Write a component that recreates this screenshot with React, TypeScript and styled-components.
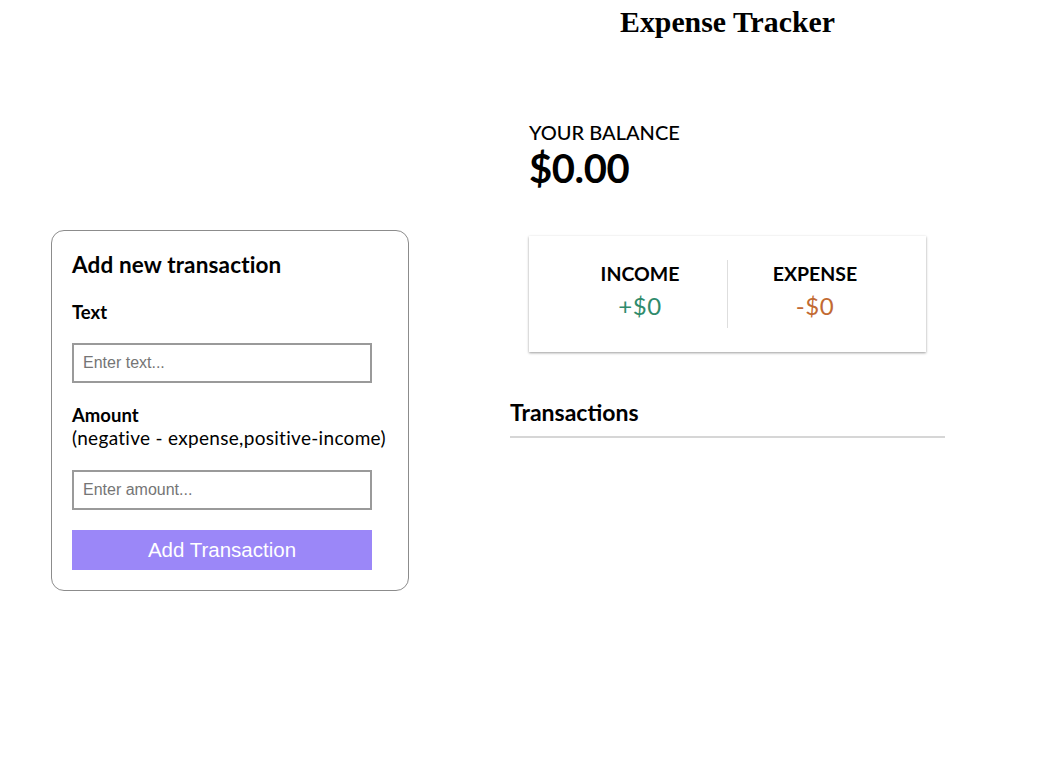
import React from 'react'
import styled, { createGlobalStyle } from 'styled-components'

const GlobalStyle = createGlobalStyle`
  body {
    margin: 0;
    background: #fff;
    color: #000;
    font-family: Lato, 'Noto Sans', sans-serif;
  }
`

const SPage = styled.div`
  display: flex;
  align-items: flex-start;
  gap: 101px;
  padding-left: 51px;
`

// left column: the form card
const SFormCard = styled.form`
  width: 358px;
  box-sizing: border-box;
  margin-top: 230px;
  padding: 20px;
  border: 1px solid #8c8c8c;
  border-radius: 13px;
  display: flex;
  flex-direction: column;
`

const SFormTitle = styled.h3`
  margin: 0 0 23px;
  font-size: 22.5px;
  font-weight: 700;
  line-height: 1.2;
  letter-spacing: 0.15px;
`

const SLabel = styled.label`
  display: block;
  font-size: 18.5px;
  font-weight: 700;
  line-height: 1.2;
  margin-bottom: ${p => p.$gap || 20}px;

  span {
    display: block;
    margin-top: 1px;
    font-size: 19px;
    font-weight: 400;
    letter-spacing: 0.3px;
  }
`

const SInput = styled.input`
  width: 300px;
  height: 40px;
  box-sizing: border-box;
  padding: 0 9px;
  border: 2px solid #9a9a9a;
  border-radius: 0;
  font-family: 'Liberation Sans', Arial, sans-serif;
  font-size: 16px;
  margin-bottom: ${p => p.$gap || 20}px;
  outline: none;

  &::placeholder {
    color: #757575;
  }
`

const SButton = styled.button`
  width: 300px;
  height: 40px;
  border: none;
  background: #9b87f8;
  color: #fff;
  font-family: 'Liberation Sans', Arial, sans-serif;
  font-size: 20.5px;
  cursor: pointer;
`

// right column
const SMain = styled.div`
  width: 435px;
  display: flex;
  flex-direction: column;
`

const STitle = styled.h1`
  margin: 5px 0 0;
  text-align: center;
  font-family: 'Liberation Serif', 'Times New Roman', serif;
  font-size: 29.8px;
  font-weight: 700;
`

const SBalance = styled.div`
  padding: 0 19px;
  margin-top: 81px;
`

const SBalanceLabel = styled.h4`
  margin: 0;
  font-size: 20px;
  font-weight: 500;
  line-height: 1.2;
`

const SBalanceValue = styled.h1`
  margin: 0;
  font-size: 40px;
  font-weight: 700;
  line-height: 1.2;
  letter-spacing: -0.4px;
`

const SSummary = styled.div`
  margin-top: 44px;
  padding: 24px 24px;
  display: flex;
  background: #fff;
  box-shadow: 0 1px 3px rgba(0, 0, 0, 0.18), 0 1px 2px rgba(0, 0, 0, 0.24);
`

const SSummaryCol = styled.div`
  flex: 1;
  text-align: center;
  padding: 2px 0 7px;
  border-right: ${p => (p.$divider ? '1px solid #dedede' : 'none')};
`

const SSummaryLabel = styled.h4`
  margin: 0;
  font-size: 19.5px;
  font-weight: 700;
  line-height: 1.2;
  text-transform: uppercase;
`

const SSummaryValue = styled.p`
  margin: 7px 0 0;
  font-size: 24px;
  line-height: 1.2;
  letter-spacing: 0.6px;
  color: ${p => p.$color};
`

const SSectionTitle = styled.h3`
  margin: 47px 0 0;
  padding-bottom: 9px;
  font-size: 23px;
  font-weight: 700;
  line-height: 1.2;
  border-bottom: 2px solid #d6d6d6;
`

export default function App() {
  return (
    <>
      <GlobalStyle />
      <SPage>
        <SFormCard onSubmit={e => e.preventDefault()}>
          <SFormTitle>Add new transaction</SFormTitle>
          <SLabel htmlFor='text' $gap={20}>Text</SLabel>
          <SInput id='text' type='text' placeholder='Enter text...' $gap={21} />
          <SLabel htmlFor='amount' $gap={20}>
            Amount
            <span>(negative - expense,positive-income)</span>
          </SLabel>
          <SInput id='amount' type='number' placeholder='Enter amount...' $gap={20} />
          <SButton type='submit'>Add Transaction</SButton>
        </SFormCard>

        <SMain>
          <STitle>Expense Tracker</STitle>
          <SBalance>
            <SBalanceLabel>YOUR BALANCE</SBalanceLabel>
            <SBalanceValue>$0.00</SBalanceValue>
            <SSummary>
              <SSummaryCol $divider>
                <SSummaryLabel>Income</SSummaryLabel>
                <SSummaryValue $color='#2f8b6c'>+$0</SSummaryValue>
              </SSummaryCol>
              <SSummaryCol>
                <SSummaryLabel>Expense</SSummaryLabel>
                <SSummaryValue $color='#c26a32'>-$0</SSummaryValue>
              </SSummaryCol>
            </SSummary>
          </SBalance>
          <SSectionTitle>Transactions</SSectionTitle>
        </SMain>
      </SPage>
    </>
  )
}
